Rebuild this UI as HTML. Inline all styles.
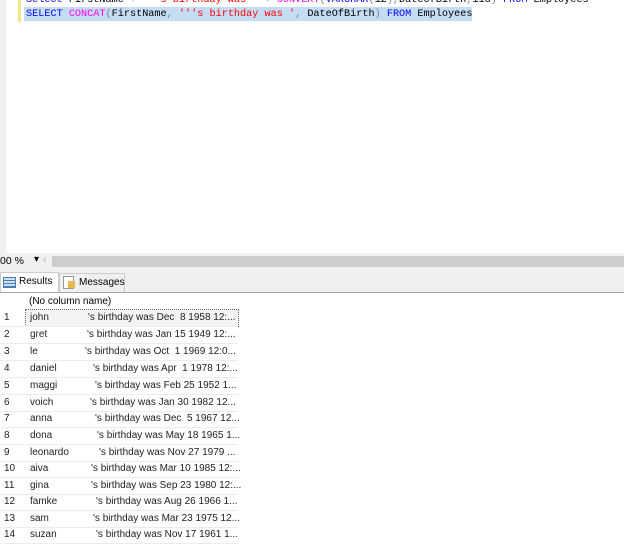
<!DOCTYPE html>
<html><head><style>
body{margin:0;width:624px;height:550px;position:relative;overflow:hidden;background:#fff;font-family:"Liberation Sans",sans-serif}
.code{position:absolute;left:26px;font-family:"Liberation Mono",monospace;font-size:10.2px;white-space:pre;line-height:13px}
.k{color:#0000ff}.f{color:#ff00ff}.s{color:#ff0000}.g{color:#808080}
.r{position:absolute;left:0;width:238px;height:17px;font-size:10px;line-height:17px;border-bottom:1px solid #ececec;color:#222}
.r span{position:absolute;white-space:pre}
</style></head><body>
<div style="position:absolute;left:0;top:0;width:6px;height:253px;background:#f0f0f0"></div>
<div style="position:absolute;left:18px;top:0;width:3px;height:22px;background:#f2e58a"></div>
<div style="position:absolute;left:24px;top:7px;width:448px;height:14px;background:#c5dcf5"></div>
<div class="code" style="top:-6px"><span class="k">Select</span> FirstName <span class="g">+</span> <span class="s">'''s birthday was '</span> <span class="g">+</span> <span class="f">CONVERT</span><span class="g">(</span><span class="k">VARCHAR</span><span class="g">(</span>12<span class="g">),</span>DateOfBirth<span class="g">,</span>113<span class="g">)</span> <span class="k">FROM</span> Employees</div>
<div class="code" style="top:8px"><span class="k">SELECT</span> <span class="f">CONCAT</span><span class="g">(</span>FirstName<span class="g">,</span> <span class="s">'''s birthday was '</span><span class="g">,</span> DateOfBirth<span class="g">)</span> <span class="k">FROM</span> Employees</div>
<div style="position:absolute;left:0;top:253px;width:624px;height:40px;background:#f0f0f0"></div>
<div style="position:absolute;left:0;top:255px;font-size:10.5px">00 %</div>
<div style="position:absolute;left:34px;top:254px;font-size:10px">▾</div>
<div style="position:absolute;left:43px;top:254px;font-size:10px;color:#aaa">‹</div>
<div style="position:absolute;left:52px;top:256px;width:572px;height:11px;background:#cdcdcd"></div>
<div style="position:absolute;left:0;top:272px;width:57px;height:20px;background:#fff;border:1px solid #ccc;border-bottom:none"></div>
<div style="position:absolute;left:3px;top:277px;width:11px;height:9px;border:1px solid #4a7fb5;background:repeating-linear-gradient(#cfe0f3 0 2px,#4a7fb5 2px 3px)"></div>
<div style="position:absolute;left:19px;top:276px;font-size:10px">Results</div>
<div style="position:absolute;left:59px;top:273px;width:64px;height:19px;border:1px solid #ccc;border-bottom:none"></div>
<div style="position:absolute;left:63px;top:276px;width:9px;height:11px;background:#fff;border:1px solid #999"></div>
<div style="position:absolute;left:68px;top:281px;width:7px;height:7px;background:#e8b84a"></div>
<div style="position:absolute;left:79px;top:277px;font-size:10px">Messages</div>
<div style="position:absolute;left:0;top:292px;width:624px;height:1px;background:#aaa"></div>
<div style="position:absolute;left:29px;top:294px;font-size:10px;line-height:15px">(No column name)</div>
<div style="position:absolute;left:25px;top:309px;width:212px;height:16px;border:1px dotted #666;background:#f3f3f3"></div>
<div class="r" style="top:309px"><span style="left:4px">1</span><span style="left:30px">john</span><span style="left:88px">'s birthday was Dec  8 1958 12:...</span></div>
<div class="r" style="top:326px"><span style="left:4px">2</span><span style="left:30px">gret</span><span style="left:87px">'s birthday was Jan 15 1949 12:...</span></div>
<div class="r" style="top:343px"><span style="left:4px">3</span><span style="left:30px">le</span><span style="left:85px">'s birthday was Oct  1 1969 12:0...</span></div>
<div class="r" style="top:360px"><span style="left:4px">4</span><span style="left:30px">daniel</span><span style="left:93px">'s birthday was Apr  1 1978 12:...</span></div>
<div class="r" style="top:377px"><span style="left:4px">5</span><span style="left:30px">maggi</span><span style="left:95px">'s birthday was Feb 25 1952 1...</span></div>
<div class="r" style="top:394px"><span style="left:4px">6</span><span style="left:30px">voich</span><span style="left:90px">'s birthday was Jan 30 1982 12...</span></div>
<div class="r" style="top:410px"><span style="left:4px">7</span><span style="left:30px">anna</span><span style="left:95px">'s birthday was Dec  5 1967 12...</span></div>
<div class="r" style="top:427px"><span style="left:4px">8</span><span style="left:30px">dona</span><span style="left:97px">'s birthday was May 18 1965 1...</span></div>
<div class="r" style="top:444px"><span style="left:4px">9</span><span style="left:30px">leonardo</span><span style="left:99px">'s birthday was Nov 27 1979 ...</span></div>
<div class="r" style="top:460px"><span style="left:4px">10</span><span style="left:30px">aiva</span><span style="left:91px">'s birthday was Mar 10 1985 12:...</span></div>
<div class="r" style="top:477px"><span style="left:4px">11</span><span style="left:30px">gina</span><span style="left:91px">'s birthday was Sep 23 1980 12:...</span></div>
<div class="r" style="top:493px"><span style="left:4px">12</span><span style="left:30px">famke</span><span style="left:96px">'s birthday was Aug 26 1966 1...</span></div>
<div class="r" style="top:510px"><span style="left:4px">13</span><span style="left:30px">sam</span><span style="left:93px">'s birthday was Mar 23 1975 12...</span></div>
<div class="r" style="top:526px"><span style="left:4px">14</span><span style="left:30px">suzan</span><span style="left:96px">'s birthday was Nov 17 1961 1...</span></div>
</body></html>
